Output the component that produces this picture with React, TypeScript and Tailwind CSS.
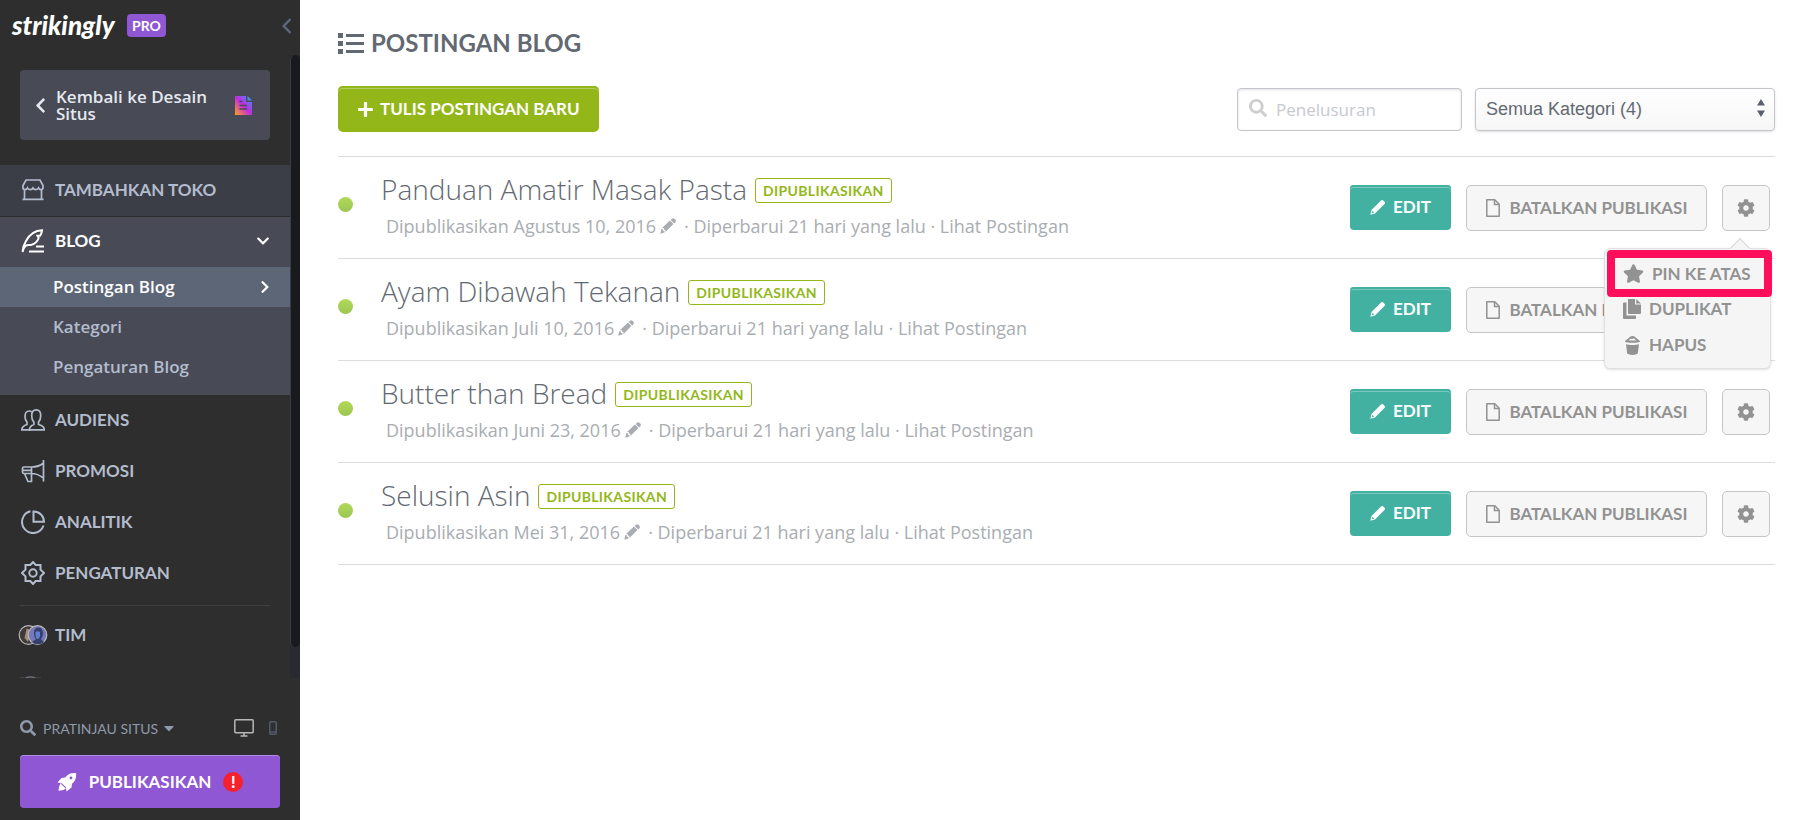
import { ReactNode } from "react";
import {
  FaChevronLeft,
  FaChevronDown,
  FaChevronRight,
  FaCog,
  FaStar,
  FaSearch,
  FaCaretDown,
  FaPlus,
} from "react-icons/fa";

const BRAND = "font-['Lato',sans-serif] font-bold";

const Stroke = ({ children }: { children: ReactNode }) => (
  <svg
    viewBox="0 0 24 24"
    width={24}
    height={24}
    fill="none"
    stroke="currentColor"
    strokeWidth={1.7}
    aria-hidden="true"
    className="shrink-0"
  >
    {children}
  </svg>
);

const StoreIcon = () => (
  <Stroke>
    <path d="M5 2h14l3 5.5v3c-1 1.6-3.4 1.5-4.500-.5-1 2.200-4.300 2.200-5.500 0-1.200 2.200-4.500 2.200-5.500 0-1.100 2-3.500 2.100-4.500.5v-3zM3.500 12.500v8.700M20.500 12.500v8.700M1.500 21.400h21" />
  </Stroke>
);

const FeatherIcon = () => (
  <Stroke>
    <path
      strokeWidth={2}
      d="M1.500 23c.3-4.500 1.300-7.500 3.500-11C8 6.500 13 1.500 21 1.300c-.3 2.700-1 4.200-2 5.500h-2.500l1.200 2.200c-1.500 4-4 6-7.200 6.800-2.300.5-4.300-.2-5.800.9-1.500 1.200-2.400 3.300-3.200 6.300z"
    />
    <path strokeWidth={2} d="M15 17.500h8M8 22.500h15" />
  </Stroke>
);

const PeopleIcon = () => (
  <Stroke>
    <path d="M8.500 21.800h14.700c0-3-1.400-4-5.700-5.300v-2.300c1.500-1.500 2.200-3.500 2.200-6.500 0-3.800-1.500-5.900-4.500-5.900s-4.500 2.100-4.500 5.900c0 3 .7 5 2.200 6.500v2.300c-3.100 1.200-4.400 2.300-4.400 5.300z" />
    <path d="M9.500 21.800H.8c0-3 1.400-4 5.200-5.300v-2.300C4.500 12.700 4 10.700 4 8.500c0-3.500 1.500-5.500 4.200-5.500 1 0 1.800.2 2.500.8" />
  </Stroke>
);

const MegaphoneIcon = () => (
  <Stroke>
    <path d="M22.500 1v21.500M22.500 4c-4 3.500-7.500 4-12 4H3a1.500 1.500 0 0 0-1.500 1.500V13A1.500 1.500 0 0 0 3 14.500h7.500c4.500 0 8 1.500 12 4.500M10.500 8v6.500M2 11.300h8.500M3.500 14.500l3.500 8h3.500v-8" />
  </Stroke>
);

const PieIcon = () => (
  <Stroke>
    <path strokeWidth={2} d="M9.500 1.300A11 11 0 1 0 22.500 15.500" />
    <path strokeWidth={2} d="M12.500 1.500v10.300H23C23 6 18.500 1.500 12.500 1.500z" />
  </Stroke>
);

const SettingsIcon = () => (
  <Stroke>
    <path
      strokeWidth={2}
      d="M12 1l2.700 3h4.800v4.600L23 12l-3.500 3.400V20h-4.800L12 23l-2.700-3H4.500v-4.600L1 12l3.500-3.400V4h4.800z"
    />
    <circle cx="12" cy="12" r="3.7" strokeWidth={2} />
  </Stroke>
);

const TeamIcon = () => (
  <svg viewBox="0 0 30 22" width={30} height={22} aria-hidden="true" className="-mx-[3px] shrink-0">
    <circle cx="10.5" cy="11" r="9.3" fill="#3f3a39" stroke="#b9b9b9" strokeWidth="1.2" />
    <path d="M8.500 5c3-1 4 3 3 7l-1.500 6-3.500-4z" fill="#a58c80" />
    <circle cx="19.5" cy="11" r="9.3" fill="#7579b8" stroke="#b9b9b9" strokeWidth="1.2" />
    <path d="M16 9c0-4 2-5.500 4.500-5.500S25 5.500 25 9c0 3-1 5-2 6l3 3c-3 3-9 3-12 0l4-3c-1.500-1.500-2-3.500-2-6z" fill="#35406f" />
    <path d="M17.500 8c1-1 3-1 4.500 0v4c-.5 2-1.500 3-2.500 3s-2-2-2-4z" fill="#5f7fd0" />
  </svg>
);

const DocIcon = () => (
  <svg viewBox="0 0 17 19" width={17} height={19} aria-hidden="true" className="shrink-0">
    <defs>
      <linearGradient id="doc" x1="0" y1="1" x2="1" y2="0">
        <stop offset="0" stopColor="#ffa21a" />
        <stop offset=".5" stopColor="#c22be0" />
        <stop offset="1" stopColor="#2f9bff" />
      </linearGradient>
    </defs>
    <path d="M0 0h11v6h6v13H0z" fill="url(#doc)" />
    <path d="M12.500 0L17 4.600h-4.500z" fill="#4b8ff5" />
    <path d="M4.500 5.500h3M4.500 9.500h7.500M4.500 13h7.500" stroke="#484b56" strokeWidth="1.5" />
  </svg>
);

const PencilIcon = () => (
  <svg viewBox="0 0 16 16" width={15} height={15} aria-hidden="true" className="shrink-0">
    <path
      fill="currentColor"
      fillRule="evenodd"
      d="M11.700.6a1.800 1.800 0 0 1 2.500 0l1.200 1.200a1.800 1.800 0 0 1 0 2.500L5.300 14.400.3 15.700l1.300-5zM2.600 11.500L1.900 14l2.600-.7z"
    />
  </svg>
);

const MetaPencilIcon = () => (
  <svg viewBox="0 0 16 16" width={16} height={16} fill="currentColor" aria-hidden="true">
    <path d="M11.700.9a2.200 2.200 0 0 1 3 0l.5.500a2.200 2.200 0 0 1 0 3l-1 1-3.500-3.500z" />
    <path d="M10 2.600L13.400 6 5.500 14l-.2-2.200-1.300-.1-.1-1.400-1.900-.2z" />
    <path d="M1.300 11l1.500.3.2 1.400 1.300.2.200 1.600-4.200 1.200z" />
  </svg>
);

const FileIcon = () => (
  <svg viewBox="0 0 14 18" width={14} height={18} fill="none" stroke="currentColor" strokeWidth={1.5} aria-hidden="true">
    <path d="M.8.8h8l4.400 4.400v12H.8z" strokeLinejoin="round" />
    <path d="M8.500 1v4.500H13" />
  </svg>
);

const CopyIcon = () => (
  <svg viewBox="0 0 18 20" width={18} height={20} fill="currentColor" aria-hidden="true">
    <path d="M0 4.500a1 1 0 0 1 1-1h2.500v13h9.500V19a1 1 0 0 1-1 1H1a1 1 0 0 1-1-1z" />
    <path d="M5 0h7v5.500h6V14a1 1 0 0 1-1 1H6a1 1 0 0 1-1-1z" />
    <path d="M13.200 0L18 4.500h-4.800z" />
  </svg>
);

const TrashIcon = () => (
  <svg viewBox="0 0 15 19" width={15} height={19} fill="currentColor" aria-hidden="true">
    <path d="M0 5.800C.3 4 2 3.600 3 2.700 4.500 1.300 5.500 0 7.500 0s3 1.300 4.500 2.700c1 .9 2.700 1.300 3 3.100-2 1.300-13 1.300-15 0z" />
    <path d="M3.500 4.500c1-1 1.600-1 2.500-2 1 1 2 .3 3-.3.6 1 1.500 1.300 2.500 2.300z" fill="#f6f6f6" />
    <path d="M1 8.300c3 .9 10 .9 13 0l-1.200 9.300c-2 1.800-8.600 1.800-10.600 0z" />
  </svg>
);

const ListIcon = () => (
  <svg viewBox="0 0 26 21" width={26} height={21} fill="currentColor" aria-hidden="true">
    <path d="M0 0h5v5H0zM0 8h5v5H0zM0 16h5v5H0z" />
    <path d="M8 1h18v3H8zM8 9h18v3H8zM8 17h18v3H8z" />
  </svg>
);

const RocketIcon = () => (
  <svg viewBox="0 0 20 20" width={20} height={20} fill="currentColor" aria-hidden="true">
    <path
      fillRule="evenodd"
      d="M19 1c.5 4.500-.5 8-4 10.800l-.5 3.700-5 4-.7-4.500-3.800-3.600L.5 10.500 4.500 6l3.700-.5C11 1.500 14.500.5 19 1zM14 4.600a1.400 1.400 0 1 0 0 2.800 1.400 1.400 0 0 0 0-2.800z"
    />
    <path d="M3.500 11.500l5.300 5c-1.800 1.500-4.800 2.200-7.300 2.200.3-2.700.8-5.500 2-7.200z" />
  </svg>
);

const posts = [
  { title: "Panduan Amatir Masak Pasta", date: "Agustus 10, 2016", menu: true },
  { title: "Ayam Dibawah Tekanan", date: "Juli 10, 2016" },
  { title: "Butter than Bread", date: "Juni 23, 2016" },
  { title: "Selusin Asin", date: "Mei 31, 2016" },
];

const NavItem = ({ icon, label }: { icon: ReactNode; label: string }) => (
  <a href="#" className="flex h-[51px] items-center gap-[10px] px-[21px] pb-[2px]">
    {icon}
    <span className={`${BRAND} text-[17px]`}>{label}</span>
  </a>
);

const Sidebar = () => (
  <aside className="flex h-screen w-[300px] shrink-0 flex-col bg-[#2e2e2e] text-[#b3bccd]">
    <div className="flex h-[55px] shrink-0 items-start justify-between pt-3 pr-2 pl-3">
      <div className="flex items-center gap-2">
        <span className="w-[107px] font-['Lato',sans-serif] text-[26px] leading-[26px] font-black text-white italic">
          strikingly
        </span>
        <span className={`${BRAND} rounded bg-[#8f57d3] px-[5px] text-[14px] leading-[23px] text-white`}>PRO</span>
      </div>
      <button aria-label="Tutup" className="mt-[6px] text-[#5c6779]">
        <svg viewBox="0 0 10 16" width={10} height={16} fill="none" stroke="currentColor" strokeWidth={2.5}>
          <path d="M8.500 1L1.800 8l6.700 7" />
        </svg>
      </button>
    </div>

    <div className="flex min-h-0 flex-1">
      <div className="min-w-0 flex-1 overflow-hidden">
        <a
          href="#"
          className="mx-5 mt-[15px] mb-[25px] flex h-[70px] items-center gap-[7px] rounded bg-[#484b56] pr-[18px] pl-3 text-[#e4e8ef]"
        >
          <FaChevronLeft size={17} className="shrink-0" />
          <span className="flex-1 font-['Open_Sans',sans-serif] text-[17px] leading-[17px] font-semibold">
            Kembali ke Desain Situs
          </span>
          <DocIcon />
        </a>

        <nav>
          <div className="border-b border-[#2e2e2e] bg-[#3c3e47]">
            <NavItem icon={<StoreIcon />} label="TAMBAHKAN TOKO" />
          </div>
          <div className="bg-[#484b56] pb-2 font-['Open_Sans',sans-serif] text-[17px] font-semibold">
            <a href="#" className="flex h-[50px] items-center gap-[10px] pr-5 pb-[3px] pl-[21px] text-white">
              <FeatherIcon />
              <span className={`${BRAND} flex-1 text-[17px]`}>BLOG</span>
              <FaChevronDown size={14} />
            </a>
            <a href="#" className="flex h-10 items-center justify-between bg-[#5d6677] pr-[18px] pl-[53px] text-white">
              Postingan Blog
              <FaChevronRight size={14} />
            </a>
            <a href="#" className="flex h-10 items-center pl-[53px]">
              Kategori
            </a>
            <a href="#" className="flex h-10 items-center pl-[53px]">
              Pengaturan Blog
            </a>
          </div>
          <NavItem icon={<PeopleIcon />} label="AUDIENS" />
          <NavItem icon={<MegaphoneIcon />} label="PROMOSI" />
          <NavItem icon={<PieIcon />} label="ANALITIK" />
          <NavItem icon={<SettingsIcon />} label="PENGATURAN" />
          <hr className="mx-5 mt-[6px] mb-1 border-[#404040]" />
          <NavItem icon={<TeamIcon />} label="TIM" />
          <svg viewBox="0 0 22 22" width={22} height={22} fill="none" stroke="#777d89" strokeWidth={1.3} className="mt-[15px] ml-5">
            <path d="M0 2.500h5c3-2.300 8-2.300 11 0h5" />
          </svg>
        </nav>
      </div>
      <div className="w-[10px] shrink-0 bg-[#292a2f]">
        <div className="h-[95%] rounded-full border-l border-[#3a3c42] bg-[#191a1e]" />
      </div>
    </div>

    <div className="px-5 pt-[38px] pb-3">
      <div className="flex h-6 items-center text-[#8e99ab]">
        <button className="flex items-center gap-[7px] font-['Lato',sans-serif] text-[14px]">
          <FaSearch size={16} />
          <span>PRATINJAU SITUS</span>
          <FaCaretDown size={16} className="-ml-1" />
        </button>
        <button aria-label="Desktop" className="ml-auto text-[#b8b8b8]">
          <svg viewBox="0 0 20 18" width={20} height={18} fill="none" stroke="currentColor" strokeWidth={1.5}>
            <rect x=".8" y=".8" width="18.4" height="12.9" rx="1" />
            <path d="M10 14v2.500M6.500 17h7" />
          </svg>
        </button>
        <button aria-label="Ponsel" className="mr-[3px] ml-[15px] text-[#535b6a]">
          <svg viewBox="0 0 8 14" width={8} height={14} fill="none" stroke="currentColor" strokeWidth={1.5}>
            <rect x=".8" y=".8" width="6.4" height="12.4" rx="1" />
            <path d="M1 11h6" />
          </svg>
        </button>
      </div>
      <button
        className={`${BRAND} mt-[15px] flex h-[53px] w-full items-center justify-center gap-3 rounded bg-[#8f57d3] text-[17px] text-white shadow-[inset_0_1px_0_#b58be6]`}
      >
        <RocketIcon />
        PUBLIKASIKAN
        <span className="flex size-5 items-center justify-center rounded-full bg-[#f5222d] text-[16px] leading-5 font-black">
          !
        </span>
      </button>
    </div>
  </aside>
);

const PostMenu = () => (
  <div
    className={`${BRAND} absolute top-[91px] right-[4px] z-10 flex h-[121px] w-[167px] flex-col rounded-md border border-[#dfe1e4] bg-[#f5f5f6] text-[17px] text-[#929292] shadow-sm`}
  >
    <div className="absolute -top-2 right-[23px] size-[14px] rotate-45 border-t border-l border-[#d5d7da] bg-[#f5f5f6]" />
    <button className="relative mt-px -mr-[2px] ml-[2px] flex h-[47px] items-center gap-2 rounded border-8 border-[#ff0f5b] bg-[#f5f5f6] pl-2">
      <FaStar size={21} />
      PIN KE ATAS
    </button>
    <button className="flex h-6 items-center gap-2 pl-[18px]">
      <CopyIcon />
      DUPLIKAT
    </button>
    <button className="mt-3 flex h-6 items-center gap-[9px] pl-5">
      <TrashIcon />
      HAPUS
    </button>
  </div>
);

const PostRow = ({ title, date, menu }: { title: string; date: string; menu?: boolean }) => (
  <li className="relative flex h-[102px] items-center border-b border-[#dcdcdc]">
    <span className="-mt-[6px] size-[15px] shrink-0 rounded-full bg-linear-to-b from-[#b0d959] to-[#9cc653]" />
    <div className="ml-7 flex-1 self-start pt-[11px] font-['Open_Sans',sans-serif]">
      <div className="flex items-center gap-2">
        <h2 className="text-[28px] leading-[42px] font-light text-[#636972]">{title}</h2>
        <span
          className={`${BRAND} mt-[3px] rounded-[3px] border border-[#93b719] px-[7px] text-[14px] leading-[23px] tracking-wide text-[#93b719]`}
        >
          DIPUBLIKASIKAN
        </span>
      </div>
      <p className="flex items-center pl-[5px] text-[18px] leading-8 whitespace-pre text-[#a9adb2]">
        <span>Dipublikasikan {date}</span>
        <button aria-label="Ubah tanggal" className="mr-2 ml-1">
          <MetaPencilIcon />
        </button>
        <span>· Diperbarui 21 hari yang lalu · </span>
        <a href="#">Lihat Postingan</a>
      </p>
    </div>
    <div className={`${BRAND} mr-[5px] flex items-start gap-[15px] self-start pt-7 text-[17px]`}>
      <button className="flex h-[45px] w-[101px] items-center justify-center gap-2 rounded bg-[#43b1a1] pb-px text-white shadow-[inset_0_2px_0_#43b1a1,inset_0_3px_0_#7bc9be]">
        <PencilIcon />
        EDIT
      </button>
      <button className="flex h-[46px] w-[241px] items-center justify-center gap-[10px] rounded-[5px] border border-[#c6c6c6] bg-[#f6f6f6] text-[#929292]">
        <FileIcon />
        BATALKAN PUBLIKASI
      </button>
      <button
        aria-label="Pengaturan postingan"
        className="flex h-[46px] w-12 items-center justify-center rounded-[5px] border border-[#c6c6c6] bg-[#f6f6f6] text-[#929292]"
      >
        <FaCog size={18} />
      </button>
    </div>
    {menu && <PostMenu />}
  </li>
);

export default function App() {
  return (
    <div className="flex min-h-screen bg-white">
      <Sidebar />
      <main className="min-w-0 flex-1 pt-[26px] pr-[29px] pl-[38px]">
        <h1 className={`${BRAND} flex items-center gap-[7px] text-[24px] leading-[34px] text-[#636972]`}>
          <ListIcon />
          POSTINGAN BLOG
        </h1>
        <div className="mt-[26px] flex items-center">
          <button
            className={`${BRAND} flex h-[46px] items-center gap-[6px] rounded-[5px] bg-[#93b719] px-[19px] text-[17px] text-white shadow-[inset_0_2px_0_#93b719,inset_0_3px_0_#b3cd5e]`}
          >
            <FaPlus size={17} />
            TULIS POSTINGAN BARU
          </button>
          <label className="mt-px ml-auto flex h-[43px] w-[225px] items-center gap-[9px] rounded border border-[#c4c5cb] px-[11px] font-['Open_Sans',sans-serif] shadow-[inset_0_1px_3px_#e2e2e6]">
            <FaSearch size={18} className="mb-1 shrink-0 text-[#cfcfcf]" />
            <input
              aria-label="Penelusuran"
              placeholder="Penelusuran"
              className="w-full min-w-0 bg-transparent text-[17px] outline-none placeholder:text-[#c6c9ce]"
            />
          </label>
          <div className="relative mt-px ml-[13px]">
            <select
              aria-label="Kategori"
              className="h-[43px] w-[300px] appearance-none rounded border border-[#c4c5cb] bg-linear-to-b from-white to-[#f6f6f7] px-[10px] font-['Liberation_Sans',sans-serif] text-[18px] text-[#636972] shadow-sm"
            >
              <option>Semua Kategori (4)</option>
            </select>
            <svg
              viewBox="0 0 8 18"
              width={8}
              height={18}
              fill="#5a616c"
              className="pointer-events-none absolute top-[11px] right-[10px]"
            >
              <path d="M4 0l4 6.500H0zM4 18l4-6.500H0z" />
            </svg>
          </div>
        </div>
        <ul className="mt-6 border-t border-[#dcdcdc]">
          {posts.map((post) => (
            <PostRow key={post.title} {...post} />
          ))}
        </ul>
      </main>
    </div>
  );
}
